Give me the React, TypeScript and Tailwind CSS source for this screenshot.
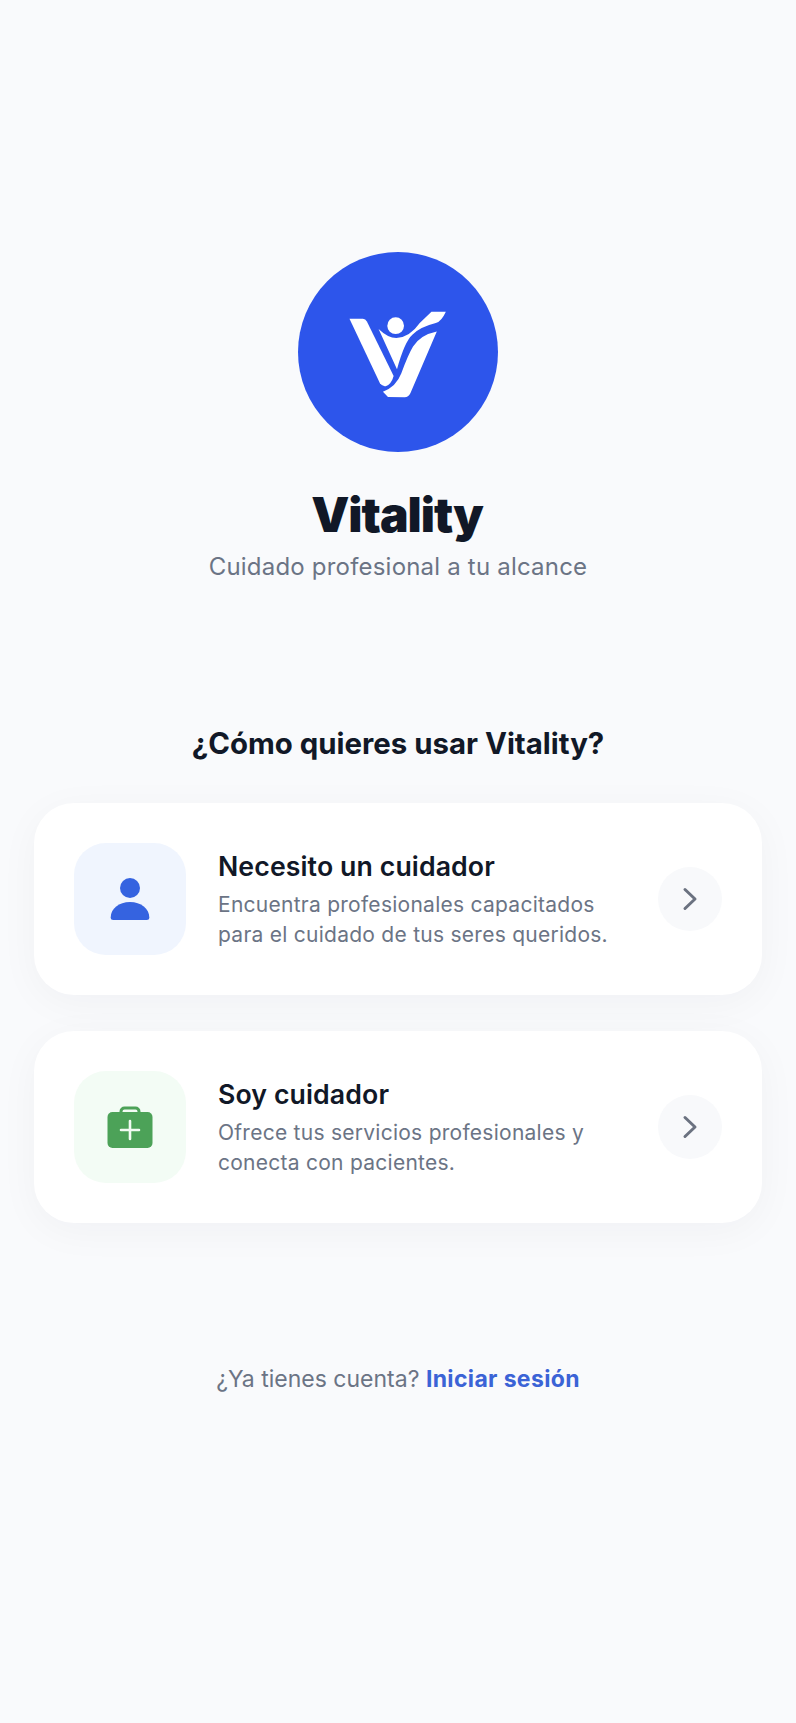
const font = { fontFamily: "Inter, 'Liberation Sans', sans-serif" };

function Logo() {
  return (
    <svg className="mt-1" width="104" height="92" viewBox="200 205 310 275" fill="#ffffff" aria-hidden="true">
      <circle cx="348" cy="258" r="25" />
      <path d="M210 237 L250 237 Q258 237 262 245 L342 408 Q335 432 320 438 Q309 441 301 430 Z" />
      <path d="M297 268 Q325 295 350 295 Q390 293 420 250 L455 216 L498 216 Q485 245 468 250 Q420 262 398 285 Q375 305 352 388 Z" />
      <path d="M471 275 Q422 285 400 320 Q385 345 365 400 Q350 440 310 455 L325 471 L375 472 Q386 472 392 460 Z" />
    </svg>
  );
}

function PersonIcon() {
  return (
    <svg width="40" height="42" viewBox="0 0 40 42" aria-hidden="true">
      <circle cx="20" cy="10" r="10" fill="#3563E0" />
      <path d="M.7 39.500C.7 30.500 9 24 20 24s19.300 6.500 19.300 15.500c0 1.700-1 2.500-2.500 2.500H3.200C1.700 42 .7 41.200.7 39.500Z" fill="#3563E0" />
    </svg>
  );
}

function CaseIcon() {
  return (
    <svg width="46" height="42" viewBox="0 0 46 42" aria-hidden="true">
      <path d="M14 7V5.500A3.500 3.500 0 0 1 17.500 2h11A3.500 3.500 0 0 1 32 5.500V7" fill="none" stroke="#4CA258" strokeWidth="3" />
      <rect x="0.500" y="6" width="45" height="36" rx="5" fill="#4CA258" />
      <path d="M23 15v18M14 24h18" fill="none" stroke="#F2FBF3" strokeWidth="2.600" strokeLinecap="round" />
    </svg>
  );
}

function Chevron() {
  return (
    <div className="flex h-16 w-16 shrink-0 items-center justify-center rounded-full bg-[#F8F9FB]">
      <svg width="16" height="24" viewBox="0 0 16 24" fill="none" aria-hidden="true">
        <path d="M3 2.500 13 12 3 21.500" stroke="#6B7280" strokeWidth="3" strokeLinecap="round" strokeLinejoin="round" />
      </svg>
    </div>
  );
}

function RoleCard({ tile, icon, title, lines }: { tile: string; icon: React.ReactNode; title: string; lines: string[] }) {
  return (
    <div className="flex h-[192px] items-center rounded-[40px] bg-white pl-10 pr-10 shadow-[0_8px_40px_rgba(17,24,39,0.04)]">
      <div className={`flex h-28 w-28 shrink-0 items-center justify-center rounded-[32px] ${tile}`}>{icon}</div>
      <div className="ml-8 flex-1">
        <div className="text-[26.700px] leading-[34px] font-semibold tracking-[0.1px] text-[#111827]">{title}</div>
        <div className="mt-[7px] text-[21px] leading-[30px] tracking-[0.26px] text-[#6B7485]">
          {lines.map((line) => (
            <div key={line}>{line}</div>
          ))}
        </div>
      </div>
      <Chevron />
    </div>
  );
}

export default function App() {
  return (
    <div style={font} className="flex min-h-[1723px] w-full flex-col items-center bg-[#F9FAFC] pt-[252px]">
      <div className="flex h-[200px] w-[200px] items-center justify-center rounded-full bg-[#2D55EB]">
        <Logo />
      </div>
      <h1 className="mt-[34px] pr-[2px] text-[48px] leading-[58px] font-black tracking-[-1px] text-[#111827]">Vitality</h1>
      <p className="mt-[7px] text-[24px] leading-[32px] tracking-[0.2px] text-[#6B7485]">Cuidado profesional a tu alcance</p>
      <h2 className="mt-[143px] text-[29.400px] leading-[36px] font-bold text-[#111827]">¿Cómo quieres usar Vitality?</h2>
      <div className="mt-[41px] flex w-[728px] flex-col gap-9">
        <RoleCard
          tile="bg-[#F0F5FE]"
          icon={<PersonIcon />}
          title="Necesito un cuidador"
          lines={["Encuentra profesionales capacitados", "para el cuidado de tus seres queridos."]}
        />
        <RoleCard
          tile="bg-[#F3FCF5]"
          icon={<CaseIcon />}
          title="Soy cuidador"
          lines={["Ofrece tus servicios profesionales y", "conecta con pacientes."]}
        />
      </div>
      <p className="mt-[140px] text-[23px] leading-[32px] text-[#6B7485]">
        ¿Ya tienes cuenta? <span className="font-bold tracking-[0.35px] text-[#3B63D6]">Iniciar sesión</span>
      </p>
    </div>
  );
}
